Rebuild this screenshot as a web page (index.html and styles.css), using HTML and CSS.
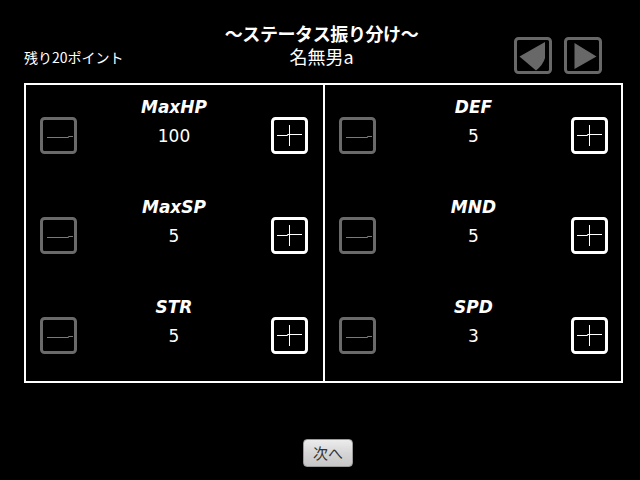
FILE: index.html
```
<!DOCTYPE html>
<html lang="ja">
<head>
<meta charset="utf-8">
<title>ステータス振り分け</title>
<link rel="stylesheet" href="styles.css">
</head>
<body>
<div class="screen">
  <header class="top">
    <div class="title">～ステータス振り分け～</div>
    <div class="points">残り20ポイント</div>
    <div class="name">名無男a</div>
    <div class="nav">
      <div class="navbtn">
        <svg width="38" height="37" viewBox="0 0 38 37"><rect x="1.5" y="1.5" width="35" height="34" rx="3" fill="none" stroke="#686868" stroke-width="3"/><path d="M5.5 19.5 L31 5 L31 21 Q29 28 22 33.5 Z" fill="#686868"/></svg>
      </div>
      <div class="navbtn">
        <svg width="38" height="37" viewBox="0 0 38 37"><rect x="1.5" y="1.5" width="35" height="34" rx="3" fill="none" stroke="#686868" stroke-width="3"/><path d="M10.5 6 L32.5 19.5 L10.5 32 Z" fill="#686868"/></svg>
      </div>
    </div>
  </header>

  <main class="board">
    <section class="col col-left">
      <div class="stat">
        <div class="label">MaxHP</div>
        <div class="ctrl">
          <div class="btn minus"><svg width="37" height="37" viewBox="0 0 37 37"><rect x="1.5" y="1.5" width="34" height="34" rx="3" fill="none" stroke="#6a6a6a" stroke-width="3"/><path d="M7 20.5 H28.5 V19.5 H33" fill="none" stroke="#7a7a7a" stroke-width="1"/></svg></div>
          <div class="value">100</div>
          <div class="btn plus"><svg width="37" height="37" viewBox="0 0 37 37"><rect x="1.5" y="1.5" width="34" height="34" rx="3" fill="none" stroke="#fff" stroke-width="3"/><path d="M6 18.5 H16.5 V17.5 H31 M18.5 8 V29" fill="none" stroke="#fff" stroke-width="1"/></svg></div>
        </div>
      </div>
      <div class="stat">
        <div class="label">MaxSP</div>
        <div class="ctrl">
          <div class="btn minus"><svg width="37" height="37" viewBox="0 0 37 37"><rect x="1.5" y="1.5" width="34" height="34" rx="3" fill="none" stroke="#6a6a6a" stroke-width="3"/><path d="M7 20.5 H28.5 V19.5 H33" fill="none" stroke="#7a7a7a" stroke-width="1"/></svg></div>
          <div class="value">5</div>
          <div class="btn plus"><svg width="37" height="37" viewBox="0 0 37 37"><rect x="1.5" y="1.5" width="34" height="34" rx="3" fill="none" stroke="#fff" stroke-width="3"/><path d="M6 18.5 H16.5 V17.5 H31 M18.5 8 V29" fill="none" stroke="#fff" stroke-width="1"/></svg></div>
        </div>
      </div>
      <div class="stat">
        <div class="label">STR</div>
        <div class="ctrl">
          <div class="btn minus"><svg width="37" height="37" viewBox="0 0 37 37"><rect x="1.5" y="1.5" width="34" height="34" rx="3" fill="none" stroke="#6a6a6a" stroke-width="3"/><path d="M7 20.5 H28.5 V19.5 H33" fill="none" stroke="#7a7a7a" stroke-width="1"/></svg></div>
          <div class="value">5</div>
          <div class="btn plus"><svg width="37" height="37" viewBox="0 0 37 37"><rect x="1.5" y="1.5" width="34" height="34" rx="3" fill="none" stroke="#fff" stroke-width="3"/><path d="M6 18.5 H16.5 V17.5 H31 M18.5 8 V29" fill="none" stroke="#fff" stroke-width="1"/></svg></div>
        </div>
      </div>
    </section>
    <section class="col col-right">
      <div class="stat">
        <div class="label">DEF</div>
        <div class="ctrl">
          <div class="btn minus"><svg width="37" height="37" viewBox="0 0 37 37"><rect x="1.5" y="1.5" width="34" height="34" rx="3" fill="none" stroke="#6a6a6a" stroke-width="3"/><path d="M7 20.5 H28.5 V19.5 H33" fill="none" stroke="#7a7a7a" stroke-width="1"/></svg></div>
          <div class="value">5</div>
          <div class="btn plus"><svg width="37" height="37" viewBox="0 0 37 37"><rect x="1.5" y="1.5" width="34" height="34" rx="3" fill="none" stroke="#fff" stroke-width="3"/><path d="M6 18.5 H16.5 V17.5 H31 M18.5 8 V29" fill="none" stroke="#fff" stroke-width="1"/></svg></div>
        </div>
      </div>
      <div class="stat">
        <div class="label">MND</div>
        <div class="ctrl">
          <div class="btn minus"><svg width="37" height="37" viewBox="0 0 37 37"><rect x="1.5" y="1.5" width="34" height="34" rx="3" fill="none" stroke="#6a6a6a" stroke-width="3"/><path d="M7 20.5 H28.5 V19.5 H33" fill="none" stroke="#7a7a7a" stroke-width="1"/></svg></div>
          <div class="value">5</div>
          <div class="btn plus"><svg width="37" height="37" viewBox="0 0 37 37"><rect x="1.5" y="1.5" width="34" height="34" rx="3" fill="none" stroke="#fff" stroke-width="3"/><path d="M6 18.5 H16.5 V17.5 H31 M18.5 8 V29" fill="none" stroke="#fff" stroke-width="1"/></svg></div>
        </div>
      </div>
      <div class="stat">
        <div class="label">SPD</div>
        <div class="ctrl">
          <div class="btn minus"><svg width="37" height="37" viewBox="0 0 37 37"><rect x="1.5" y="1.5" width="34" height="34" rx="3" fill="none" stroke="#6a6a6a" stroke-width="3"/><path d="M7 20.5 H28.5 V19.5 H33" fill="none" stroke="#7a7a7a" stroke-width="1"/></svg></div>
          <div class="value">3</div>
          <div class="btn plus"><svg width="37" height="37" viewBox="0 0 37 37"><rect x="1.5" y="1.5" width="34" height="34" rx="3" fill="none" stroke="#fff" stroke-width="3"/><path d="M6 18.5 H16.5 V17.5 H31 M18.5 8 V29" fill="none" stroke="#fff" stroke-width="1"/></svg></div>
        </div>
      </div>
    </section>
  </main>

  <footer class="footer">
    <button class="next" type="button">次へ</button>
  </footer>
</div>
</body>
</html>
```
FILE: styles.css
```
html, body {
  margin: 0;
  padding: 0;
  background: #000;
}

body {
  width: 640px;
  height: 480px;
  overflow: hidden;
  color: #fff;
  font-family: "Noto Sans CJK JP", "DejaVu Sans", sans-serif;
}

.screen {
  display: flex;
  flex-direction: column;
  width: 640px;
  height: 480px;
}

.top {
  display: grid;
  grid-template-columns: 1fr auto 1fr;
  grid-template-rows: 22px 24px;
  height: 83px;
  box-sizing: border-box;
  padding: 22px 21px 0 24px;
}

.title {
  grid-column: 2;
  grid-row: 1;
  justify-self: center;
  font-size: 18px;
  line-height: 22px;
  font-weight: bold;
  letter-spacing: -0.4px;
  white-space: nowrap;
}

.points {
  grid-column: 1;
  grid-row: 2;
  padding-top: 1px;
  font-size: 14px;
  line-height: 24px;
  white-space: nowrap;
}

.name {
  grid-column: 2;
  grid-row: 2;
  justify-self: center;
  font-size: 18px;
  line-height: 24px;
  white-space: nowrap;
}

.nav {
  grid-column: 3;
  grid-row: 1 / span 2;
  justify-self: end;
  align-self: start;
  margin-top: 15px;
  margin-right: 17px;
  display: flex;
  gap: 12px;
}

.navbtn {
  width: 38px;
  height: 37px;
}

.navbtn svg,
.btn svg {
  display: block;
}

.board {
  display: flex;
  margin-left: 24px;
  width: 599px;
  height: 300px;
  box-sizing: border-box;
  border: 2px solid #fff;
}

.col {
  display: flex;
  flex-direction: column;
  gap: 43px;
  box-sizing: border-box;
  padding-top: 12px;
}

.col-left {
  width: 299px;
  border-right: 2px solid #fff;
  padding-left: 14px;
  padding-right: 15px;
}

.col-right {
  flex: 1;
  padding-left: 14px;
  padding-right: 13px;
}

.stat {
  display: flex;
  flex-direction: column;
}

.label {
  text-align: center;
  font-family: "DejaVu Sans", sans-serif;
  font-weight: bold;
  font-style: italic;
  font-size: 17px;
  line-height: 20px;
}

.ctrl {
  display: flex;
  align-items: center;
  justify-content: space-between;
  height: 37px;
}

.btn {
  width: 37px;
  height: 37px;
}

.value {
  font-family: "DejaVu Sans", sans-serif;
  font-size: 17px;
  line-height: 20px;
}

.footer {
  display: flex;
  justify-content: center;
  padding-left: 16px;
  margin-top: 56px;
}

.next {
  width: 50px;
  height: 28px;
  margin: 0;
  padding: 0;
  border: 1px solid #9a9a9a;
  border-radius: 4px;
  background: linear-gradient(#ececec, #d6d6d6 50%, #c6c6c6);
  color: #333;
  font-family: "Noto Sans CJK JP", sans-serif;
  font-size: 15px;
  line-height: 26px;
}
```
